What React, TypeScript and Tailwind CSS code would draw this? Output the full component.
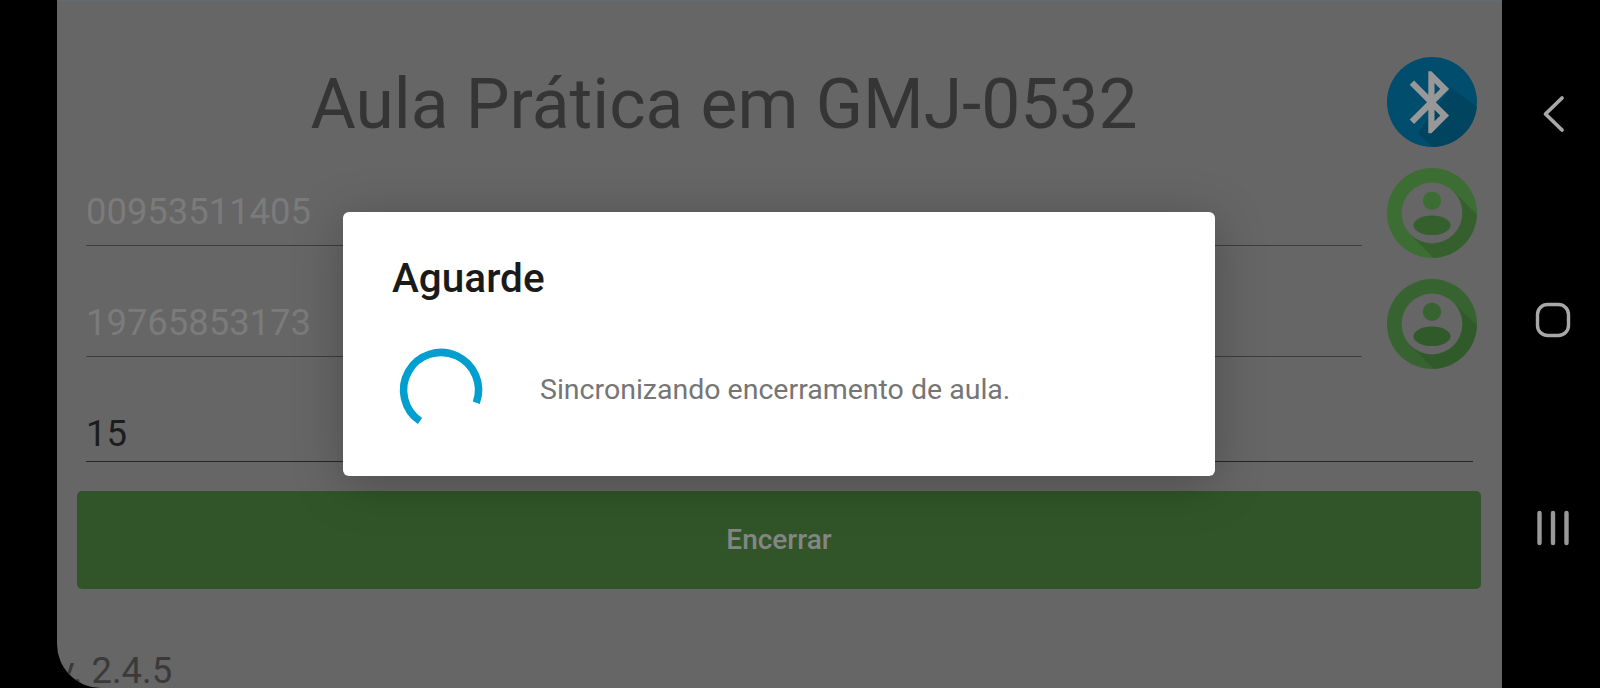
function Field({ value, dim, short }: { value: string; dim?: boolean; short?: boolean }) {
  return (
    <div
      className={`flex items-end border-b text-[36.4px] leading-[44px] ${short ? 'h-[93px] border-[#262626] pb-[5px]' : 'h-[111px] border-[#3d3d3d] pb-[11px]'} ${dim ? 'text-[#7b7b7b]' : 'text-[#1c1c1c]'}`}
    >
      {value}
    </div>
  )
}

function PersonBadge({ color, shade }: { color: string; shade: string }) {
  return (
    <svg width="90" height="90" viewBox="0 0 90 90">
      <circle cx="45" cy="45" r="45" fill={color} />
      <path d="M66.6 23.4 L90 46.8 A45 45 0 0 1 46.8 90 L23.4 66.6 Z" fill={shade} />
      <circle cx="45" cy="45" r="30.4" fill="#666666" />
      <circle cx="45" cy="32.7" r="9.2" fill={color} />
      <ellipse cx="45" cy="57.3" rx="18.5" ry="9.7" fill={shade} />
    </svg>
  )
}

function BluetoothBadge() {
  return (
    <svg width="90" height="90" viewBox="0 0 90 90">
      <circle cx="45" cy="45" r="45" fill="#004d6e" />
      <path d="M64 31 L90 50 A45 45 0 0 1 46 90 L31 76 Z" fill="#00445f" />
      <g transform="translate(7.2 8) scale(3.1)">
        <path
          fill="#989898"
          d="M17.71 7.71 12 2h-1v7.59L6.41 5 5 6.41 10.59 12 5 17.59 6.41 19 11 14.41V22h1l5.71-5.71-4.3-4.29 4.3-4.29zM13 5.83l1.88 1.88L13 9.59V5.83zm1.88 10.46L13 18.17v-3.76l1.88 1.88z"
        />
      </g>
    </svg>
  )
}

function NavBar() {
  return (
    <nav className="flex w-[98px] flex-col items-center gap-[167px] bg-black pl-[3px] pt-[94px]">
      <svg width="40" height="40" viewBox="0 0 40 40" fill="none" stroke="#a8a8a8" strokeWidth="3.8" strokeLinecap="round" strokeLinejoin="round">
        <path d="M29 4 L12.5 20 L29 36" />
      </svg>
      <svg width="40" height="40" viewBox="0 0 40 40" fill="none" stroke="#a8a8a8" strokeWidth="3.4">
        <rect x="4.5" y="3.5" width="31" height="31" rx="10" />
      </svg>
      <svg width="40" height="40" viewBox="0 0 40 40" fill="none" stroke="#999999" strokeWidth="4.4" strokeLinecap="round">
        <path d="M6.5 5 V35 M20 5 V35 M33.5 5 V35" />
      </svg>
    </nav>
  )
}

export default function App() {
  return (
    <div className="relative flex h-[688px] w-[1600px] overflow-hidden bg-black font-['Roboto',sans-serif]">
      <div className="w-[57px] shrink-0" />

      {/* App screen, already dimmed by the dialog scrim */}
      <main className="w-[1445px] shrink-0 overflow-hidden rounded-bl-[44px] border-t border-[#5f6d72] bg-[#666666]">
        <div className="flex pl-[29px] pr-[25px]">
          <div className="w-[1276px]">
            <h1 className="h-[134px] pt-[64px] text-center text-[69.5px] leading-[80px] text-[#353535]">
              Aula Prática em GMJ-0532
            </h1>
            <Field value="00953511405" dim />
            <Field value="19765853173" dim />
          </div>
          <div className="ml-[25px] flex flex-col gap-[21px] pt-[56px]">
            <BluetoothBadge />
            <PersonBadge color="#3c6e33" shade="#355f2c" />
            <PersonBadge color="#376330" shade="#315a2a" />
          </div>
        </div>

        <div className="ml-[29px] w-[1387px]">
          <Field value="15" short />
        </div>

        <button className="ml-[20px] mt-[29px] flex h-[98px] w-[1404px] items-center justify-center rounded-[5px] bg-[#315528] text-[28px] font-medium text-[#858585]">
          Encerrar
        </button>

        <p className="mt-[60px] text-[36.5px] leading-[44px] text-[#3a3a3a]">v. 2.4.5</p>
      </main>

      <NavBar />

      {/* Progress dialog */}
      <div className="absolute left-[343px] top-[212px] h-[264px] w-[872px] rounded-[6px] bg-white pl-[49px] pt-[42px] shadow-[0_8px_50px_rgba(0,0,0,0.25)]">
        <h2 className="text-[40.5px] font-medium leading-[48px] text-[#1a1a1a]">Aguarde</h2>
        <div className="ml-[4px] mt-[43px] flex items-center">
          <svg width="90" height="90" viewBox="0 0 90 90" fill="none" stroke="#009fcf" strokeWidth="7.5">
            <path d="M80.3 57.8 A37.5 37.5 0 1 0 24 76" />
          </svg>
          <p className="ml-[54px] text-[28.5px] text-[#757575]">Sincronizando encerramento de aula.</p>
        </div>
      </div>
    </div>
  )
}
